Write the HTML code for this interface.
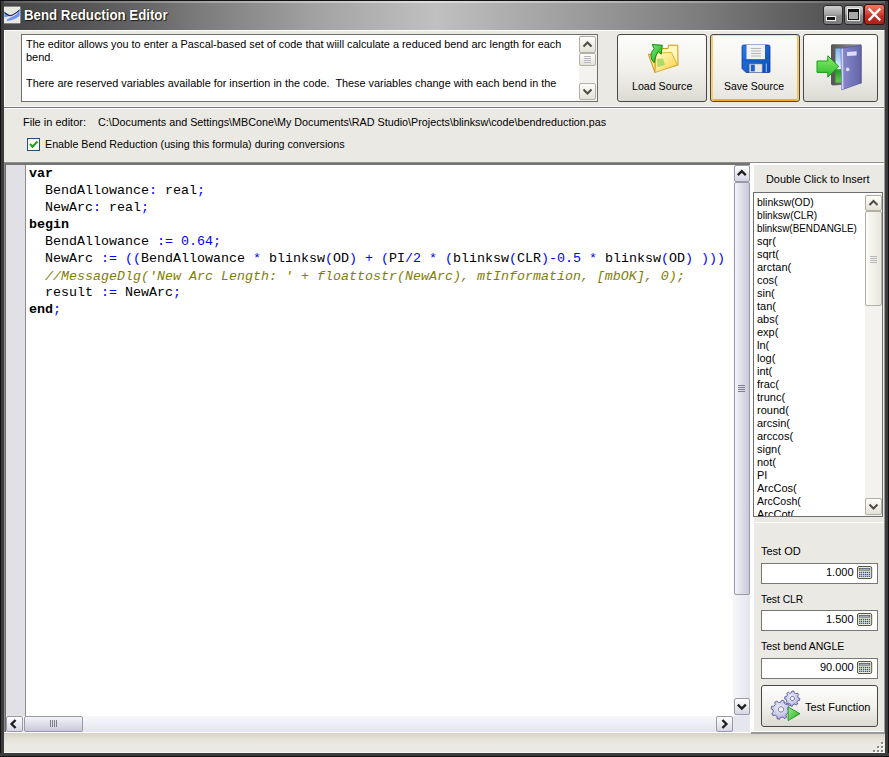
<!DOCTYPE html>
<html><head><meta charset="utf-8">
<style>
*{margin:0;padding:0;box-sizing:border-box}
html,body{width:889px;height:757px;overflow:hidden;background:#ebe9e4}
body{position:relative;font-family:"Liberation Sans",sans-serif;font-size:11px;color:#000}
.a{position:absolute}
svg{position:absolute;overflow:visible}
.t{position:absolute;white-space:pre;line-height:13px;transform-origin:0 0}
.code{position:absolute;font-family:"Liberation Mono",monospace;font-size:13.33px;white-space:pre;line-height:17px;color:#000}
.b{font-weight:bold}
.s{color:#0000ff}
.c{color:#808000;font-style:italic;position:relative;top:1px}
/* XP-ish scroll buttons (top memo / list) */
.sb{position:absolute;border:1px solid #b2b0a4;border-radius:2px;background:linear-gradient(#fdfdfb,#e4e2d8)}
/* lavender scroll (editor) */
.lb{position:absolute;border:1px solid #9a9aa6;border-radius:2px;background:linear-gradient(#ffffff,#d6d6e4)}
.lth{position:absolute;border:1px solid #9a9aa6;border-radius:2px;background:linear-gradient(to right,#f4f4fa,#c8c8da)}
.lthh{position:absolute;border:1px solid #9a9aa6;border-radius:2px;background:linear-gradient(#f4f4fa,#c8c8da)}
.btn{position:absolute;border:1px solid #474747;border-radius:3px;background:linear-gradient(#fdfdfc,#f2f1ec 50%,#dcdbd3)}
.edit{position:absolute;background:#fff;border:1px solid #777;}
</style></head><body>

<!-- ============ TITLE BAR ============ -->
<div class="a" style="left:0;top:0;width:889px;height:30px;background:linear-gradient(to right,#444 0%,#4a4a4a 3%,#525252 8%,#686868 17%,#7a7a7a 22%,#a6a6a6 37%,#c0c0c0 49%,#b0b0b0 56%,#9c9c9c 65%,#7c7c7c 79%,#585858 92%,#484848 100%)"></div>
<div class="a" style="left:0;top:0;width:889px;height:1px;background:#121212"></div>
<div class="a" style="left:4px;top:1px;width:881px;height:2px;background:linear-gradient(to right,rgba(255,255,255,.15),rgba(255,255,255,.45) 48%,rgba(255,255,255,.15))"></div>
<!-- app icon -->
<svg style="left:4px;top:7px" width="16" height="16" viewBox="0 0 16 16">
  <rect x="0" y="0" width="16" height="16" fill="#e8e8e2"/>
  <path d="M0 5 L6.5 8.8 L0 10.5Z" fill="#6f8ff0"/>
  <path d="M16 2.5 L16 8 L12.5 6.5Z" fill="#7a98f0"/>
  <path d="M2.8 12.6 Q9 9.6 16 5.2 L16 8.8 Q10 13.4 3.4 13.9Z" fill="#6f8ff2"/>
  <path d="M0 5 Q4 8.8 6.6 8.6 Q10 8 16 2.6" fill="none" stroke="#1a2a5a" stroke-width="1.1"/>
  <rect x="0" y="0" width="16" height="16" fill="none" stroke="#f4f4f0" stroke-width=".7"/>
</svg>
<div class="t" id="ttl" style="left:24px;top:7px;transform:scaleX(.947);font-weight:bold;font-size:14px;line-height:17px;color:#fff;text-shadow:0 0 1px #000,1px 1px 1px rgba(0,0,0,.7)">Bend Reduction Editor</div>
<!-- title buttons -->
<div class="a" style="left:823px;top:5px;width:20px;height:20px;border:1px solid #2a2a2a;border-radius:3px;background:linear-gradient(#cfcfcf,#a4a4a4 45%,#8a8a8a 55%,#7c7c7c)"></div>
<div class="a" style="left:826px;top:16px;width:10px;height:5px;background:#f4f4f4"></div>
<div class="a" style="left:827px;top:17px;width:8px;height:3px;background:#111"></div>
<div class="a" style="left:844px;top:5px;width:20px;height:20px;border:1px solid #2a2a2a;border-radius:3px;background:linear-gradient(#cfcfcf,#a4a4a4 45%,#8a8a8a 55%,#7c7c7c)"></div>
<div class="a" style="left:847px;top:8px;width:13px;height:13px;background:#e8e8e8"></div>
<div class="a" style="left:848px;top:9px;width:11px;height:11px;background:#111"></div>
<div class="a" style="left:849px;top:12px;width:9px;height:7px;background:#a8a8a8"></div>
<div class="a" style="left:864px;top:4px;width:21px;height:21px;border:1px solid #3a1010;border-radius:3px;background:linear-gradient(#ee7a66,#d8463a 45%,#c02a22 60%,#b02018)"></div>
<svg style="left:864px;top:4px" width="21" height="21" viewBox="0 0 21 21"><path d="M5.5 5.5 L15.5 15.5 M15.5 5.5 L5.5 15.5" stroke="#fff" stroke-width="2.4" stroke-linecap="square"/></svg>

<!-- ============ WINDOW BORDERS ============ -->
<div class="a" style="left:0;top:0;width:1px;height:757px;background:#101010"></div>
<div class="a" style="left:1px;top:1px;width:3px;height:756px;background:#3c3c3c"></div>
<div class="a" style="left:885px;top:1px;width:3px;height:756px;background:#3c3c3c"></div>
<div class="a" style="left:888px;top:0;width:1px;height:757px;background:#101010"></div>
<div class="a" style="left:0;top:753px;width:889px;height:3px;background:#3c3c3c"></div>
<div class="a" style="left:0;top:756px;width:889px;height:1px;background:#101010"></div>
<div class="a" style="left:884px;top:30px;width:1px;height:723px;background:#9a9a9a"></div>

<!-- ============ TOP PANEL ============ -->
<div class="a" style="left:4px;top:30px;width:880px;height:1px;background:#fdfdfd"></div>
<div class="a" style="left:4px;top:30px;width:1px;height:77px;background:#fdfdfd"></div>
<div class="a" style="left:21px;top:34px;width:577px;height:68px;background:#fff;border:1px solid #6e6e6e"></div>
<div class="t" id="m1" style="left:26px;top:38px;transform:scaleX(.987)">The editor allows you to enter a Pascal-based set of code that wiill calculate a reduced bend arc length for each</div>
<div class="t" id="m2" style="left:26px;top:51px">bend.</div>
<div class="t" id="m4" style="left:26px;top:77px;transform:scaleX(.987)">There are reserved variables available for insertion in the code.  These variables change with each bend in the</div>
<!-- memo scrollbar -->
<div class="a" style="left:579px;top:35px;width:18px;height:66px;background:#f3f2ee"></div>
<div class="sb" style="left:579px;top:36px;width:17px;height:17px"></div>
<svg style="left:579px;top:36px" width="17" height="17"><path d="M4.5 10.5 L8.5 6.5 L12.5 10.5" fill="none" stroke="#4f4c40" stroke-width="2"/></svg>
<div class="sb" style="left:579px;top:53px;width:17px;height:13px"></div>
<svg style="left:579px;top:53px" width="17" height="13"><path d="M5 3.5H12M5 5.5H12M5 7.5H12M5 9.5H12" stroke="#b8b8c4" stroke-width="1"/></svg>
<div class="sb" style="left:579px;top:83px;width:17px;height:17px"></div>
<svg style="left:579px;top:83px" width="17" height="17"><path d="M4.5 6.5 L8.5 10.5 L12.5 6.5" fill="none" stroke="#4f4c40" stroke-width="2"/></svg>

<!-- Load Source button -->
<div class="btn" style="left:617px;top:34px;width:90px;height:68px"></div>
<svg style="left:644px;top:40px" width="40" height="36" viewBox="0 0 40 36">
  <defs>
    <linearGradient id="fy" x1="0" y1="0" x2="1" y2="1"><stop offset="0" stop-color="#fffbd0"/><stop offset="1" stop-color="#f6d23a"/></linearGradient>
    <linearGradient id="ga" x1="0" y1="0" x2="1" y2="1"><stop offset="0" stop-color="#7af07a"/><stop offset="1" stop-color="#12a21a"/></linearGradient>
  </defs>
  <path d="M11.5 8.8 L24 8.5 L24.5 5.2 L33.8 5.2 L34 25 L11.5 31 Z" fill="#fff7c0" stroke="#cf9512" stroke-width="1"/>
  <path d="M4.3 14.3 L11.5 14.8 L11 32.5 Z" fill="#fbe68a" stroke="#cf9512" stroke-width="1"/>
  <path d="M12 13 L27.5 12.5 L33.5 25 L11 32.5 Z" fill="url(#fy)" stroke="#d9a01a" stroke-width=".8"/>
  <path d="M13 19 L19 18.5 L21 25 L13.5 27Z" fill="#9bd65a" opacity=".8"/>
  <path d="M10.2 22.8 C6.5 19 5.2 13.5 10.2 8.8 L8.3 4.5 L18.3 5.2 L17.2 14.3 L14.4 11.6 C12.3 14 11.2 17.5 10.2 22.8Z" fill="url(#ga)" stroke="#0b7a12" stroke-width=".9" stroke-linejoin="round"/>
</svg>
<div class="t" id="ls" style="left:632px;top:80px;transform:scaleX(.967)">Load Source</div>

<!-- Save Source button -->
<div class="a" style="left:710px;top:34px;width:90px;height:68px;border:1px solid #474747;border-radius:3px;background:linear-gradient(#fdfdfc,#f4f3ef 50%,#e6e5de);box-shadow:inset 2px 0 0 #fbcd6e,inset -2px 0 0 #f9c35a,inset 0 1px 0 #fde0a0,inset 0 -2px 0 #f6ac1a"></div>
<svg style="left:736px;top:40px" width="40" height="38" viewBox="0 0 40 38">
  <defs><linearGradient id="fb" x1="0" y1="0" x2="1" y2="1"><stop offset="0" stop-color="#2c78dc"/><stop offset="1" stop-color="#0a4cbc"/></linearGradient></defs>
  <path d="M7.5 5 L32.5 5 Q34 5 34 6.5 L34 31.5 Q34 32.5 33 32.5 L10 32.5 L6 28.5 L6 6.5 Q6 5 7.5 5Z" fill="url(#fb)" stroke="#0a3ea8" stroke-width=".8"/>
  <rect x="10.5" y="5" width="18.5" height="14.3" fill="#f2f2f2"/>
  <path d="M15 8.5H25M15 11H25M15 13.5H25M15 16H25" stroke="#b8b8b8" stroke-width="1.2"/>
  <rect x="6.5" y="19.5" width="27" height="1.8" fill="#1a5ac8"/>
  <rect x="13.3" y="24" width="12.8" height="8.3" fill="#e8e8e8" stroke="#909090" stroke-width=".5"/>
  <rect x="14.8" y="24.6" width="4" height="6.8" fill="#2060c8"/>
  <rect x="29.8" y="23.5" width="1" height="8.5" fill="#a8c4f0"/>
</svg>
<div class="t" id="ss" style="left:724px;top:80px;transform:scaleX(.952)">Save Source</div>

<!-- Exit button -->
<div class="btn" style="left:803px;top:34px;width:75px;height:68px"></div>
<svg style="left:810px;top:38px" width="56" height="56" viewBox="0 0 56 56">
  <defs>
    <linearGradient id="dfr" x1="0" y1="0" x2="1" y2="0"><stop offset="0" stop-color="#555"/><stop offset="1" stop-color="#9a9a9a"/></linearGradient>
    <linearGradient id="sky" x1="0" y1="0" x2="0" y2="1"><stop offset="0" stop-color="#7ab8f0"/><stop offset="1" stop-color="#e8f4ff"/></linearGradient>
    <linearGradient id="grn" x1="0" y1="0" x2="0" y2="1"><stop offset="0" stop-color="#1a9a1a"/><stop offset="1" stop-color="#60d040"/></linearGradient>
    <linearGradient id="door" x1="0" y1="0" x2="1" y2="0"><stop offset="0" stop-color="#8a8ad0"/><stop offset="1" stop-color="#6464a8"/></linearGradient>
    <linearGradient id="arr" x1="0" y1="0" x2="0" y2="1"><stop offset="0" stop-color="#8af06a"/><stop offset="1" stop-color="#2aba2a"/></linearGradient>
  </defs>
  <path d="M22 6.3 L50 6.3 Q52 6.3 52 8.5 L52 45.5 L23 47.5 Q21 47.5 21 45.5 L21 8 Q21 6.3 22 6.3Z" fill="url(#dfr)"/>
  <rect x="25.5" y="10.5" width="6" height="21" fill="url(#sky)"/>
  <rect x="25.5" y="31.5" width="6" height="13" fill="url(#grn)"/>
  <path d="M31 10.4 L51 7 L51 45 L31.8 51.8 Z" fill="url(#door)" stroke="#5050a0" stroke-width=".7"/>
  <path d="M31.3 10.8 L33 10.5 L33.5 51 L31.8 51.6Z" fill="#d0d0f4"/>
  <path d="M37 14 L46.6 13.3 L46.6 17.5 L37 18Z" fill="#dcdcf8"/>
  <circle cx="37.7" cy="31.4" r="1.8" fill="#e0e0e0"/>
  <path d="M7 23 L17.8 23 L17.8 17.8 L28.8 28.5 L17.8 39.2 L17.8 34.4 L7 34.4Z" fill="url(#arr)" stroke="#1a9a1a" stroke-width="1"/>
</svg>

<!-- divider -->
<div class="a" style="left:4px;top:106px;width:880px;height:1px;background:#f8f8f6"></div>
<div class="a" style="left:4px;top:107px;width:880px;height:1px;background:#747474"></div>
<div class="a" style="left:4px;top:108px;width:880px;height:1px;background:#fdfdfd"></div>

<!-- ============ FILE SECTION ============ -->
<div class="t" id="fe" style="left:23px;top:116px">File in editor:</div>
<div class="t" id="fp" style="left:98px;top:116px;transform:scaleX(.979)">C:\Documents and Settings\MBCone\My Documents\RAD Studio\Projects\blinksw\code\bendreduction.pas</div>
<div class="a" style="left:27px;top:138px;width:13px;height:13px;background:linear-gradient(135deg,#f4f4ee,#fff);border:1px solid #1c5180"></div>
<svg style="left:27px;top:138px" width="13" height="13"><path d="M3 6 L5.5 8.8 L10.5 3.5" fill="none" stroke="#21a121" stroke-width="2.1"/></svg>
<div class="t" id="en" style="left:45px;top:138px;transform:scaleX(.974)">Enable Bend Reduction (using this formula) during conversions</div>

<!-- ============ EDITOR ============ -->
<div class="a" style="left:4px;top:162px;width:747px;height:571px;background:#fff"></div>
<div class="a" style="left:4px;top:162px;width:747px;height:1px;background:#8e8e8e"></div>
<div class="a" style="left:4px;top:163px;width:747px;height:2px;background:#747474"></div>
<div class="a" style="left:4px;top:162px;width:1px;height:571px;background:#8e8e8e"></div>
<div class="a" style="left:5px;top:163px;width:1px;height:570px;background:#6a6a6a"></div>
<div class="a" style="left:750px;top:163px;width:1px;height:570px;background:#fdfdfd"></div>
<div class="a" style="left:4px;top:732px;width:747px;height:1px;background:#fdfdfd"></div>
<div class="a" style="left:6px;top:165px;width:19px;height:551px;background:#e0e0e6"></div>
<div class="a" style="left:25px;top:165px;width:1px;height:551px;background:#8c8c8c"></div>
<div class="code" style="left:29px;top:165px"><span class="b">var</span>
  BendAllowance<span class="s">:</span> real<span class="s">;</span>
  NewArc<span class="s">:</span> real<span class="s">;</span>
<span class="b">begin</span>
  BendAllowance <span class="s">:=</span> <span class="s">0.64;</span>
  NewArc <span class="s">:=</span> <span class="s">((</span>BendAllowance <span class="s">*</span> blinksw<span class="s">(</span>OD<span class="s">)</span> <span class="s">+</span> <span class="s">(</span>PI<span class="s">/2</span> <span class="s">*</span> <span class="s">(</span>blinksw<span class="s">(</span>CLR<span class="s">)-0.5</span> <span class="s">*</span> blinksw<span class="s">(</span>OD<span class="s">)</span> <span class="s">)))</span>
  <span class="c">//MessageDlg('New Arc Length: ' + floattostr(NewArc), mtInformation, [mbOK], 0);</span>
  result <span class="s">:=</span> NewArc<span class="s">;</span>
<span class="b">end</span><span class="s">;</span></div>
<!-- v scroll -->
<div class="a" style="left:733px;top:165px;width:17px;height:551px;background:linear-gradient(to right,#f6f6fa,#e4e4ee)"></div>
<div class="lb" style="left:734px;top:165px;width:16px;height:17px"></div>
<svg style="left:734px;top:165px" width="16" height="17"><path d="M3.8 10.2 L7.8 6.2 L11.8 10.2" fill="none" stroke="#202020" stroke-width="2.4"/></svg>
<div class="lth" style="left:734px;top:182px;width:16px;height:413px"></div>
<svg style="left:734px;top:382px" width="16" height="12"><path d="M4 3.5H11M4 5.5H11M4 7.5H11M4 9.5H11" stroke="#7c7c8a" stroke-width="1"/></svg>
<div class="lb" style="left:734px;top:698px;width:16px;height:17px"></div>
<svg style="left:734px;top:698px" width="16" height="17"><path d="M3.8 6.6 L7.8 10.6 L11.8 6.6" fill="none" stroke="#202020" stroke-width="2.4"/></svg>
<!-- h scroll -->
<div class="a" style="left:6px;top:716px;width:727px;height:16px;background:linear-gradient(#f8f8fc,#e4e4ee)"></div>
<div class="a" style="left:733px;top:716px;width:17px;height:16px;background:#e6e6ee"></div>
<div class="lb" style="left:6px;top:716px;width:17px;height:16px"></div>
<svg style="left:6px;top:716px" width="17" height="16"><path d="M9.6 4 L5.6 8 L9.6 12" fill="none" stroke="#202020" stroke-width="2.4"/></svg>
<div class="lthh" style="left:24px;top:716px;width:59px;height:16px"></div>
<svg style="left:24px;top:716px" width="59" height="16"><path d="M26.5 4V11M28.5 4V11M30.5 4V11M32.5 4V11" stroke="#7c7c8a" stroke-width="1"/></svg>
<div class="lb" style="left:716px;top:716px;width:17px;height:16px"></div>
<svg style="left:716px;top:716px" width="17" height="16"><path d="M6.4 4 L10.4 8 L6.4 12" fill="none" stroke="#202020" stroke-width="2.4"/></svg>

<!-- ============ RIGHT PANEL ============ -->
<div class="a" style="left:751px;top:162px;width:133px;height:1px;background:#8e8e8e"></div>
<div class="a" style="left:751px;top:163px;width:133px;height:2px;background:#fdfdfd"></div>
<div class="a" style="left:751px;top:163px;width:3px;height:570px;background:#fdfdfd"></div>
<div class="t" id="dc" style="left:766px;top:173px;transform:scaleX(.99)">Double Click to Insert</div>
<div class="a" style="left:753px;top:192px;width:130px;height:325px;background:#fff;border:1px solid #6e6e6e"></div>
<div class="a" style="left:754px;top:194px;width:111px;height:322px;overflow:hidden">
<div class="t li" style="left:3px;top:2px;transform:scaleX(.947)">blinksw(OD)</div>
<div class="t li" style="left:3px;top:15px;transform:scaleX(.92)">blinksw(CLR)</div>
<div class="t li" style="left:3px;top:28px;transform:scaleX(.897)">blinksw(BENDANGLE)</div>
<div class="t li" style="left:3px;top:41px">sqr(</div>
<div class="t li" style="left:3px;top:54px">sqrt(</div>
<div class="t li" style="left:3px;top:67px">arctan(</div>
<div class="t li" style="left:3px;top:80px">cos(</div>
<div class="t li" style="left:3px;top:93px">sin(</div>
<div class="t li" style="left:3px;top:106px">tan(</div>
<div class="t li" style="left:3px;top:119px">abs(</div>
<div class="t li" style="left:3px;top:132px">exp(</div>
<div class="t li" style="left:3px;top:145px">ln(</div>
<div class="t li" style="left:3px;top:158px">log(</div>
<div class="t li" style="left:3px;top:171px">int(</div>
<div class="t li" style="left:3px;top:184px">frac(</div>
<div class="t li" style="left:3px;top:197px">trunc(</div>
<div class="t li" style="left:3px;top:210px">round(</div>
<div class="t li" style="left:3px;top:223px">arcsin(</div>
<div class="t li" style="left:3px;top:236px">arccos(</div>
<div class="t li" style="left:3px;top:249px">sign(</div>
<div class="t li" style="left:3px;top:262px">not(</div>
<div class="t li" style="left:3px;top:275px">PI</div>
<div class="t li" style="left:3px;top:288px">ArcCos(</div>
<div class="t li" style="left:3px;top:301px;transform:scaleX(.955)">ArcCosh(</div>
<div class="t li" style="left:3px;top:314px">ArcCot(</div>
</div>
<!-- list scrollbar -->
<div class="a" style="left:865px;top:194px;width:17px;height:322px;background:#f3f2ee"></div>
<div class="sb" style="left:865px;top:195px;width:17px;height:16px"></div>
<svg style="left:865px;top:195px" width="17" height="16"><path d="M4.5 10 L8.5 6 L12.5 10" fill="none" stroke="#4f4c40" stroke-width="2"/></svg>
<div class="sb" style="left:865px;top:211px;width:17px;height:95px;background:linear-gradient(to right,#fbfbf8,#e8e6dc)"></div>
<svg style="left:865px;top:253px" width="17" height="12"><path d="M5 3.5H12M5 5.5H12M5 7.5H12M5 9.5H12" stroke="#b8b8bc" stroke-width="1"/></svg>
<div class="sb" style="left:865px;top:498px;width:17px;height:17px"></div>
<svg style="left:865px;top:498px" width="17" height="17"><path d="M4.5 6.5 L8.5 10.5 L12.5 6.5" fill="none" stroke="#4f4c40" stroke-width="2"/></svg>

<!-- test panel -->
<div class="a" style="left:753px;top:522px;width:131px;height:1px;background:#fdfdfd"></div>
<div class="a" style="left:753px;top:522px;width:1px;height:209px;background:#fdfdfd"></div>
<div class="a" style="left:753px;top:731px;width:131px;height:1px;background:#fdfdfd"></div>
<div class="t" id="to" style="left:761px;top:545px">Test OD</div>
<div class="edit" style="left:761px;top:563px;width:117px;height:21px"></div>
<div class="t" id="v1" style="left:826px;top:566px">1.000</div>
<svg style="left:857px;top:566px" width="16" height="13" viewBox="0 0 16 13">
  <rect x=".5" y=".5" width="14.2" height="12" rx="1.5" fill="#ecead0" stroke="#56564a" stroke-width="1"/>
  <rect x="1.8" y="2" width="11.4" height="2.6" fill="#5a5a6a"/>
  <rect x="2.6" y="2.8" width="9.8" height="1" fill="#a8c4e4"/>
  <g fill="#3a5890"><rect x="2.0" y="5.8" width="1.3" height="1.3"/><rect x="3.9" y="5.8" width="1.3" height="1.3"/><rect x="5.9" y="5.8" width="1.3" height="1.3"/><rect x="7.9" y="5.8" width="1.3" height="1.3"/><rect x="9.8" y="5.8" width="1.3" height="1.3"/><rect x="11.8" y="5.8" width="1.3" height="1.3"/><rect x="2.0" y="7.8" width="1.3" height="1.3"/><rect x="3.9" y="7.8" width="1.3" height="1.3"/><rect x="5.9" y="7.8" width="1.3" height="1.3"/><rect x="7.9" y="7.8" width="1.3" height="1.3"/><rect x="9.8" y="7.8" width="1.3" height="1.3"/><rect x="11.8" y="7.8" width="1.3" height="1.3"/><rect x="2.0" y="9.7" width="1.3" height="1.3"/><rect x="3.9" y="9.7" width="1.3" height="1.3"/><rect x="5.9" y="9.7" width="1.3" height="1.3"/><rect x="7.9" y="9.7" width="1.3" height="1.3"/><rect x="9.8" y="9.7" width="1.3" height="1.3"/><rect x="11.8" y="9.7" width="1.3" height="1.3"/></g>
</svg>
<div class="t" id="tc" style="left:761px;top:593px;transform:scaleX(.932)">Test CLR</div>
<div class="edit" style="left:761px;top:610px;width:117px;height:21px"></div>
<div class="t" id="v2" style="left:826px;top:613px">1.500</div>
<svg style="left:857px;top:613px" width="16" height="13" viewBox="0 0 16 13">
  <rect x=".5" y=".5" width="14.2" height="12" rx="1.5" fill="#ecead0" stroke="#56564a" stroke-width="1"/>
  <rect x="1.8" y="2" width="11.4" height="2.6" fill="#5a5a6a"/>
  <rect x="2.6" y="2.8" width="9.8" height="1" fill="#a8c4e4"/>
  <g fill="#3a5890"><rect x="2.0" y="5.8" width="1.3" height="1.3"/><rect x="3.9" y="5.8" width="1.3" height="1.3"/><rect x="5.9" y="5.8" width="1.3" height="1.3"/><rect x="7.9" y="5.8" width="1.3" height="1.3"/><rect x="9.8" y="5.8" width="1.3" height="1.3"/><rect x="11.8" y="5.8" width="1.3" height="1.3"/><rect x="2.0" y="7.8" width="1.3" height="1.3"/><rect x="3.9" y="7.8" width="1.3" height="1.3"/><rect x="5.9" y="7.8" width="1.3" height="1.3"/><rect x="7.9" y="7.8" width="1.3" height="1.3"/><rect x="9.8" y="7.8" width="1.3" height="1.3"/><rect x="11.8" y="7.8" width="1.3" height="1.3"/><rect x="2.0" y="9.7" width="1.3" height="1.3"/><rect x="3.9" y="9.7" width="1.3" height="1.3"/><rect x="5.9" y="9.7" width="1.3" height="1.3"/><rect x="7.9" y="9.7" width="1.3" height="1.3"/><rect x="9.8" y="9.7" width="1.3" height="1.3"/><rect x="11.8" y="9.7" width="1.3" height="1.3"/></g>
</svg>
<div class="t" id="ta" style="left:761px;top:640px;transform:scaleX(.953)">Test bend ANGLE</div>
<div class="edit" style="left:761px;top:658px;width:117px;height:21px"></div>
<div class="t" id="v3" style="left:820px;top:661px">90.000</div>

<svg style="left:857px;top:661px" width="16" height="13" viewBox="0 0 16 13">
  <rect x=".5" y=".5" width="14.2" height="12" rx="1.5" fill="#ecead0" stroke="#56564a" stroke-width="1"/>
  <rect x="1.8" y="2" width="11.4" height="2.6" fill="#5a5a6a"/>
  <rect x="2.6" y="2.8" width="9.8" height="1" fill="#a8c4e4"/>
  <g fill="#3a5890"><rect x="2.0" y="5.8" width="1.3" height="1.3"/><rect x="3.9" y="5.8" width="1.3" height="1.3"/><rect x="5.9" y="5.8" width="1.3" height="1.3"/><rect x="7.9" y="5.8" width="1.3" height="1.3"/><rect x="9.8" y="5.8" width="1.3" height="1.3"/><rect x="11.8" y="5.8" width="1.3" height="1.3"/><rect x="2.0" y="7.8" width="1.3" height="1.3"/><rect x="3.9" y="7.8" width="1.3" height="1.3"/><rect x="5.9" y="7.8" width="1.3" height="1.3"/><rect x="7.9" y="7.8" width="1.3" height="1.3"/><rect x="9.8" y="7.8" width="1.3" height="1.3"/><rect x="11.8" y="7.8" width="1.3" height="1.3"/><rect x="2.0" y="9.7" width="1.3" height="1.3"/><rect x="3.9" y="9.7" width="1.3" height="1.3"/><rect x="5.9" y="9.7" width="1.3" height="1.3"/><rect x="7.9" y="9.7" width="1.3" height="1.3"/><rect x="9.8" y="9.7" width="1.3" height="1.3"/><rect x="11.8" y="9.7" width="1.3" height="1.3"/></g>
</svg>
<div class="btn" style="left:761px;top:685px;width:117px;height:42px"></div>
<svg id="gears" style="left:765px;top:688px" width="40" height="36" viewBox="0 0 40 36">
  <defs><radialGradient id="gg" cx=".45" cy=".4" r=".7"><stop offset="0" stop-color="#eeeef8"/><stop offset=".6" stop-color="#c8c8ea"/><stop offset="1" stop-color="#9090c8"/></radialGradient>
  <linearGradient id="pl" x1="0" y1="0" x2="1" y2="1"><stop offset="0" stop-color="#a0e890"/><stop offset="1" stop-color="#20b020"/></linearGradient></defs>
  <path d="M33.14 9.79 L34.80 10.35 L34.59 12.36 L32.87 12.58 L31.98 14.23 L32.75 15.79 L31.18 17.07 L29.81 16.00 L28.01 16.54 L27.45 18.20 L25.44 17.99 L25.22 16.27 L23.57 15.38 L22.01 16.15 L20.73 14.58 L21.80 13.21 L21.26 11.41 L19.60 10.85 L19.81 8.84 L21.53 8.62 L22.42 6.97 L21.65 5.41 L23.22 4.13 L24.59 5.20 L26.39 4.66 L26.95 3.00 L28.96 3.21 L29.18 4.93 L30.83 5.82 L32.39 5.05 L33.67 6.62 L32.60 7.99Z M27.4 8.4 A2.1 2.1 0 1 0 27.41 8.4Z" fill="url(#gg)" stroke="#5a5a96" stroke-width=".9" fill-rule="evenodd"/>
  <path d="M23.20 21.91 L25.13 22.92 L24.50 25.39 L22.32 25.35 L20.90 27.25 L21.55 29.33 L19.36 30.64 L17.84 29.06 L15.49 29.40 L14.48 31.33 L12.01 30.70 L12.05 28.52 L10.15 27.10 L8.07 27.75 L6.76 25.56 L8.34 24.04 L8.00 21.69 L6.07 20.68 L6.70 18.21 L8.88 18.25 L10.30 16.35 L9.65 14.27 L11.84 12.96 L13.36 14.54 L15.71 14.20 L16.72 12.27 L19.19 12.90 L19.15 15.08 L21.05 16.50 L23.13 15.85 L24.44 18.04 L22.86 19.56Z M16 18.8 A2.6 2.6 0 1 0 16.01 18.8Z" fill="url(#gg)" stroke="#5a5a96" stroke-width=".9" fill-rule="evenodd"/>
  <circle cx="16" cy="21.4" r="2.1" fill="#f4f4e8"/>
  <path d="M23.1 19 L35 25.7 L23.1 32.6Z" fill="url(#pl)" stroke="#1a961a" stroke-width=".9" stroke-linejoin="round"/>
</svg>
<div class="t" id="tf" style="left:805px;top:701px">Test Function</div>

<!-- status bar -->
<div class="a" style="left:4px;top:733px;width:881px;height:20px;background:linear-gradient(#d6d2c6,#e4e1d8 30%,#ebe9e3 60%,#ebe9e4)"></div>
<div class="a" style="left:751px;top:732px;width:134px;height:2px;background:#9a9a9a"></div>
<div class="a" style="left:4px;top:752px;width:881px;height:1px;background:#f6f6f4"></div>
<svg style="left:872px;top:740px" width="12" height="12"><g fill="#fff"><rect x="10" y="3" width="2" height="2"/><rect x="6" y="7" width="2" height="2"/><rect x="10" y="7" width="2" height="2"/><rect x="2" y="11" width="2" height="2"/><rect x="6" y="11" width="2" height="2"/><rect x="10" y="11" width="2" height="2"/></g><g fill="#8c8a84"><rect x="9" y="2" width="2" height="2"/><rect x="5" y="6" width="2" height="2"/><rect x="9" y="6" width="2" height="2"/><rect x="1" y="10" width="2" height="2"/><rect x="5" y="10" width="2" height="2"/><rect x="9" y="10" width="2" height="2"/></g></svg>
</body></html>
